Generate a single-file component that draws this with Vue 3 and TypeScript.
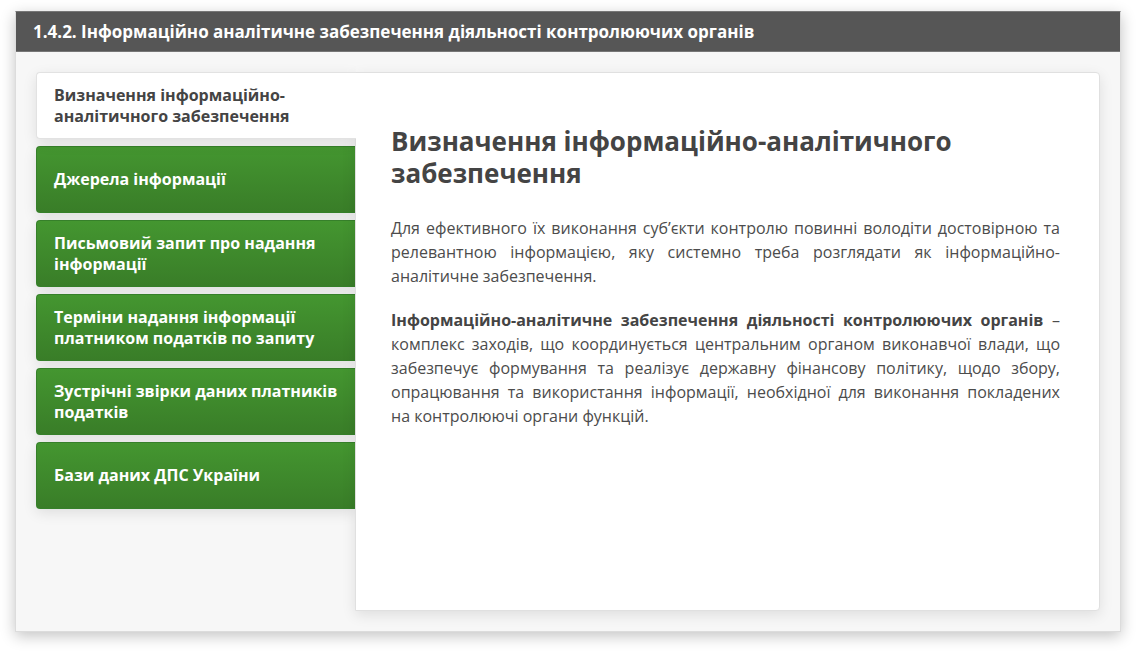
<script setup lang="ts">
import { ref } from 'vue'

interface Part {
  bold?: boolean
  text: string
}

interface Topic {
  id: string
  label: string
  paragraphs: Part[][]
}

const topics: Topic[] = [
  {
    id: 'definition',
    label: 'Визначення інформаційно-аналітичного забезпечення',
    paragraphs: [
      [
        {
          text: 'Для ефективного їх виконання суб’єкти контролю повинні володіти достовірною та релевантною інформацією, яку системно треба розглядати як інформаційно-аналітичне забезпечення.',
        },
      ],
      [
        { bold: true, text: 'Інформаційно-аналітичне забезпечення діяльності контролюючих органів' },
        {
          text: ' – комплекс заходів, що координується центральним органом виконавчої влади, що забезпечує формування та реалізує державну фінансову політику, щодо збору, опрацювання та використання інформації, необхідної для виконання покладених на\u00a0контролюючі органи функцій.',
        },
      ],
    ],
  },
  { id: 'sources', label: 'Джерела інформації', paragraphs: [] },
  { id: 'request', label: 'Письмовий запит про надання інформації', paragraphs: [] },
  { id: 'terms', label: 'Терміни надання інформації платником податків по запиту', paragraphs: [] },
  { id: 'checks', label: 'Зустрічні звірки даних платників податків', paragraphs: [] },
  { id: 'databases', label: 'Бази даних ДПС України', paragraphs: [] },
]

const active = ref<Topic>(topics[0])
</script>

<template>
  <main class="page">
    <section class="card">
      <h1 class="title">1.4.2. Інформаційно аналітичне забезпечення діяльності контролюючих органів</h1>
      <div class="body">
        <div class="tabs" role="tablist" aria-orientation="vertical">
          <button
            v-for="topic in topics"
            :id="`tab-${topic.id}`"
            :key="topic.id"
            type="button"
            role="tab"
            class="tab"
            :class="{ active: topic.id === active.id }"
            :aria-selected="topic.id === active.id"
            aria-controls="panel"
            @click="active = topic"
          >
            {{ topic.label }}
          </button>
        </div>
        <article id="panel" class="panel" role="tabpanel" :aria-labelledby="`tab-${active.id}`">
          <h2 class="heading">{{ active.label }}</h2>
          <p v-for="(paragraph, i) in active.paragraphs" :key="i" class="text">
            <template v-for="(part, j) in paragraph" :key="j">
              <strong v-if="part.bold">{{ part.text }}</strong>
              <template v-else>{{ part.text }}</template>
            </template>
          </p>
        </article>
      </div>
    </section>
  </main>
</template>

<style>
body {
  margin: 0;
  background: #fff;
}
</style>

<style scoped>
.page {
  box-sizing: border-box;
  min-height: 100vh;
  padding: 11px 15px 21px;
  display: flex;
  font-family: 'Open Sans', 'Noto Sans', sans-serif;
  color: #444;
}

.card {
  flex: 1;
  display: flex;
  flex-direction: column;
  background: #f7f7f7;
  border: 1px solid #dcdcdc;
  border-top-color: #777;
  box-shadow: 0 4px 14px rgba(0, 0, 0, 0.24);
}

.title {
  margin: 0;
  padding: 8px 17px;
  background: #565656;
  border-bottom: 1px solid #777;
  color: #fff;
  font-size: 17px;
  line-height: 23px;
  font-weight: 700;
}

.body {
  flex: 1;
  display: flex;
  padding: 20px;
}

.tabs {
  flex: 0 0 319px;
  display: flex;
  flex-direction: column;
  gap: 7px;
}

.tab {
  box-sizing: border-box;
  min-height: 67px;
  padding: 11px 10px 11px 17px;
  border: 1px solid #36802a;
  border-right: 0;
  border-radius: 4px 0 0 4px;
  background: linear-gradient(#449630, #397d28);
  box-shadow: 0 4px 14px rgba(0, 0, 0, 0.1);
  color: #fff;
  font: inherit;
  font-size: 16px;
  line-height: 21px;
  font-weight: 700;
  text-align: left;
  cursor: pointer;
}

.tab.active {
  z-index: 1;
  margin-right: -1px;
  padding-right: 50px;
  border-color: #e2e2e2;
  background: #fff;
  color: #444;
  clip-path: inset(-20px 0 -20px -20px);
}

.panel {
  flex: 1;
  padding: 52px 39px 35px 35px;
  background: #fff;
  border: 1px solid #e0e0e0;
  border-radius: 0 4px 4px 0;
  box-shadow: 0 4px 14px rgba(0, 0, 0, 0.1);
}

.heading {
  margin: 0 0 27px;
  font-size: 26px;
  line-height: 32px;
  font-weight: 700;
}

.text {
  margin: 0 0 20px;
  color: #4c4c4c;
  font-size: 16px;
  line-height: 24px;
  text-align: justify;
}

.text strong {
  color: #444;
}
</style>
